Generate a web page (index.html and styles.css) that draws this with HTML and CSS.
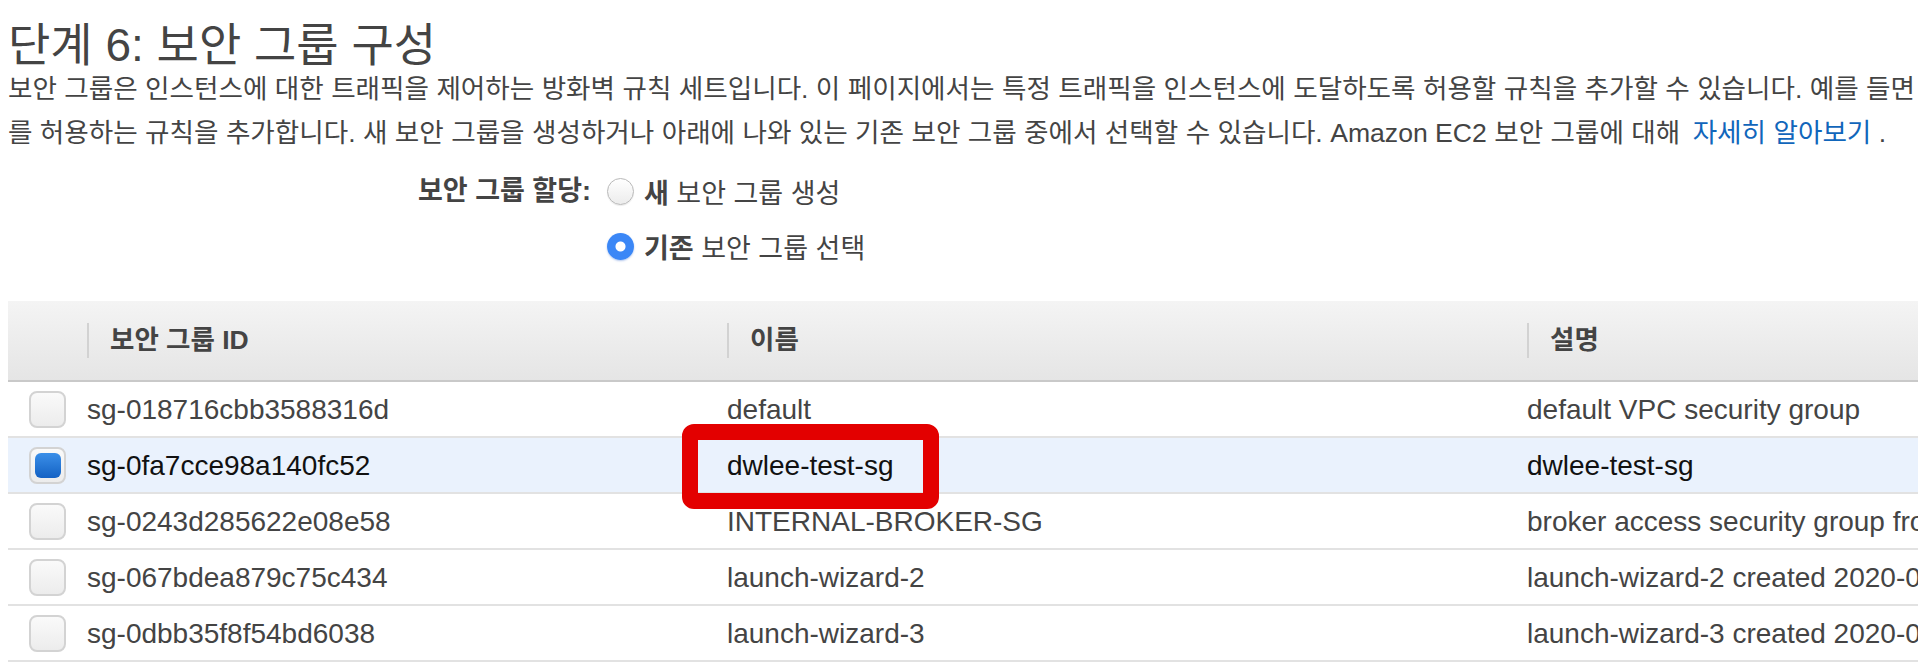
FILE: index.html
```html
<!DOCTYPE html>
<html lang="ko">
<head>
<meta charset="utf-8">
<title>단계 6: 보안 그룹 구성</title>
<link rel="stylesheet" href="styles.css">
</head>
<body>
<div class="page">
  <h1 class="title">단계 6: 보안 그룹 구성</h1>
  <p class="intro">보안 그룹은 인스턴스에 대한 트래픽을 제어하는 방화벽 규칙 세트입니다. 이 페이지에서는 특정 트래픽을 인스턴스에 도달하도록 허용할 규칙을 추가할 수 있습니다. 예를 들면 웹 서버를 설정하여 인터넷 트래픽이 인스턴스에 도달하도록 허용하려면 HTTP 및 HTTPS 포트에 대한 무제한 액세스<br>를 허용하는 규칙을 추가합니다. 새 보안 그룹을 생성하거나 아래에 나와 있는 기존 보안 그룹 중에서 선택할 수 있습니다. Amazon EC2 보안 그룹에 대해 <a href="#" class="link">자세히 알아보기</a> .</p>

  <div class="assign">
    <div class="assign-label">보안 그룹 할당:</div>
    <div class="options">
      <label class="option"><span class="radio"></span><span><b>새</b> 보안 그룹 생성</span></label>
      <label class="option"><span class="radio checked"></span><span><b>기존</b> 보안 그룹 선택</span></label>
    </div>
  </div>

  <table class="sg-table">
    <colgroup>
      <col class="c-check">
      <col class="c-id">
      <col class="c-name">
      <col class="c-desc">
    </colgroup>
    <thead>
      <tr>
        <th></th>
        <th><span class="th-label">보안 그룹 ID</span></th>
        <th><span class="th-label">이름</span></th>
        <th><span class="th-label">설명</span></th>
      </tr>
    </thead>
    <tbody>
      <tr>
        <td><div class="cell check-cell"><span class="checkbox"></span></div></td>
        <td><div class="cell">sg-018716cbb3588316d</div></td>
        <td><div class="cell">default</div></td>
        <td><div class="cell">default VPC security group</div></td>
      </tr>
      <tr class="selected">
        <td><div class="cell check-cell"><span class="checkbox checked"></span></div></td>
        <td><div class="cell">sg-0fa7cce98a140fc52</div></td>
        <td><div class="cell name-cell">dwlee-test-sg<span class="highlight"></span></div></td>
        <td><div class="cell">dwlee-test-sg</div></td>
      </tr>
      <tr>
        <td><div class="cell check-cell"><span class="checkbox"></span></div></td>
        <td><div class="cell">sg-0243d285622e08e58</div></td>
        <td><div class="cell">INTERNAL-BROKER-SG</div></td>
        <td><div class="cell">broker access security group from internal network</div></td>
      </tr>
      <tr>
        <td><div class="cell check-cell"><span class="checkbox"></span></div></td>
        <td><div class="cell">sg-067bdea879c75c434</div></td>
        <td><div class="cell">launch-wizard-2</div></td>
        <td><div class="cell">launch-wizard-2 created 2020-05-12T14:21:39.512+09:00</div></td>
      </tr>
      <tr>
        <td><div class="cell check-cell"><span class="checkbox"></span></div></td>
        <td><div class="cell">sg-0dbb35f8f54bd6038</div></td>
        <td><div class="cell">launch-wizard-3</div></td>
        <td><div class="cell">launch-wizard-3 created 2020-05-13T10:02:11.874+09:00</div></td>
      </tr>
    </tbody>
  </table>
</div>
</body>
</html>
```

FILE: styles.css
```css
html, body {
  margin: 0;
  padding: 0;
  overflow: hidden;
  background: #ffffff;
}

body {
  font-family: "Liberation Sans", "Noto Sans CJK KR", sans-serif;
  color: #444444;
}

.page {
  width: 2600px;
  padding: 0 8px;
}

.title {
  margin: 0;
  padding-top: 23px;
  font-size: 46px;
  line-height: 44px;
  font-weight: normal;
  color: #444444;
}

.intro {
  margin: 0;
  font-size: 26.6px;
  line-height: 44px;
  white-space: nowrap;
}

.link {
  color: #1166bb;
  text-decoration: none;
  margin-left: 5px;
}

.assign {
  display: grid;
  grid-template-columns: 583px auto;
  column-gap: 16px;
  margin-top: 9px;
  font-size: 27px;
}

.assign-label {
  text-align: right;
  font-weight: bold;
  height: 55px;
  line-height: 55px;
}

.options {
  display: flex;
  flex-direction: column;
}

.option {
  display: flex;
  align-items: center;
  gap: 10px;
  height: 55px;
}

.radio {
  width: 27px;
  height: 27px;
  box-sizing: border-box;
  border-radius: 50%;
  border: 1.5px solid #b9b9b9;
  background: linear-gradient(#ffffff, #ececec);
  box-shadow: 0 1px 1px rgba(0, 0, 0, 0.08);
}

.radio.checked {
  border: none;
  background: radial-gradient(circle, #ffffff 0 4.5px, #3b87f6 5.5px);
  box-shadow: 0 1px 2px rgba(30, 90, 200, 0.35);
}

.sg-table {
  margin-top: 27px;
  border-spacing: 0;
  table-layout: fixed;
  width: 2519px;
  font-size: 28px;
}

.c-check { width: 79px; }
.c-id { width: 640px; }
.c-name { width: 800px; }

th {
  height: 79px;
  padding: 0;
  background: linear-gradient(#f4f4f4, #e5e5e5);
  border-bottom: 2px solid #c9c9c9;
  text-align: left;
  font-size: 26.5px;
  font-weight: bold;
  color: #444444;
}

.th-label {
  display: block;
  border-left: 2px solid #d2d2d2;
  padding-left: 21px;
  line-height: 35px;
}

td {
  padding: 0;
  border-bottom: 2px solid #e2e2e2;
}

.cell {
  height: 54px;
  display: flex;
  align-items: center;
  white-space: nowrap;
  padding-top: 2px;
  box-sizing: border-box;
}

.check-cell {
  justify-content: center;
  padding-top: 0;
}

.checkbox {
  width: 37px;
  height: 37px;
  box-sizing: border-box;
  border: 2px solid #d3d3d3;
  border-radius: 8px;
  background: linear-gradient(#fafafa, #ececec);
  display: flex;
  align-items: center;
  justify-content: center;
}

.checkbox.checked::after {
  content: "";
  width: 26px;
  height: 25px;
  border-radius: 6px;
  background: linear-gradient(#3b8fe8, #1462c4);
}

tr.selected td {
  background: #eaf2fd;
  color: #111111;
}

.name-cell {
  position: relative;
}

.highlight {
  position: absolute;
  left: -45px;
  top: -14px;
  width: 257px;
  height: 85px;
  box-sizing: border-box;
  border: 16px solid #e30000;
  border-radius: 12px;
}
```
